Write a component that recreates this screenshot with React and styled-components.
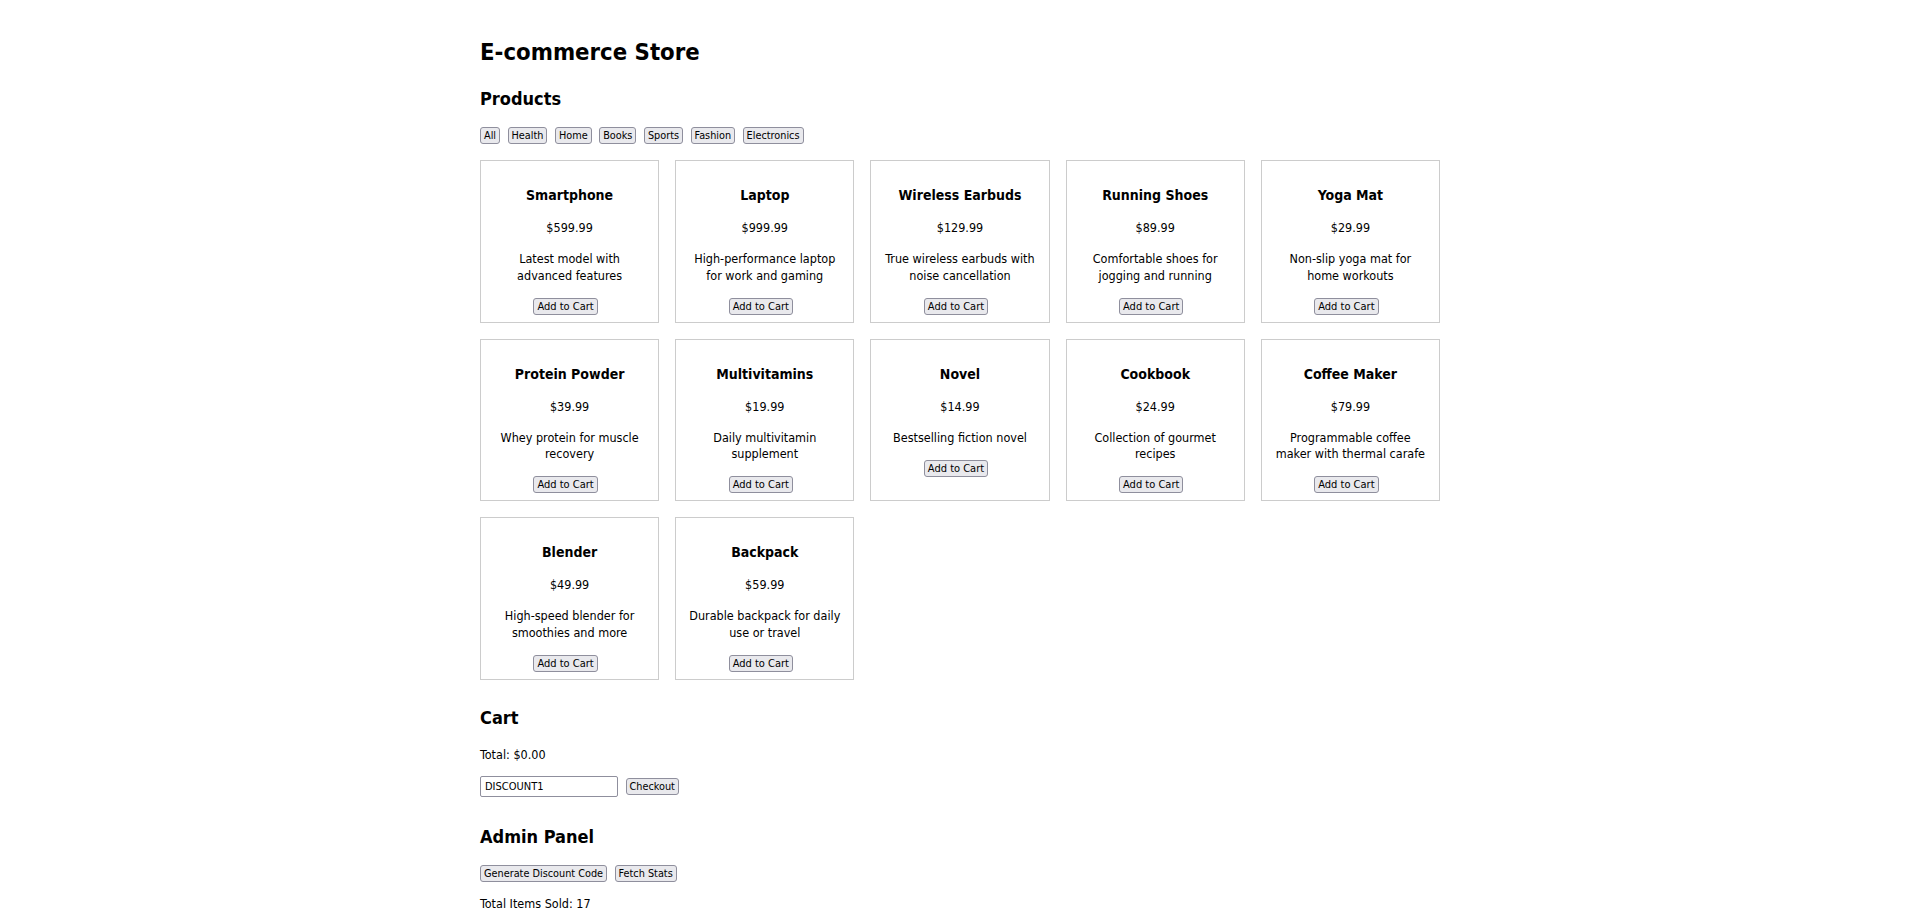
import React, { useState } from "react";
import styled, { createGlobalStyle } from "styled-components";

const GlobalStyle = createGlobalStyle`
  body {
    margin: 0;
    background: #fff;
    color: #000;
    font-family: "DejaVu Sans Condensed", "DejaVu Sans", "Liberation Sans", sans-serif;
    font-size: 12.5px;
  }
`;

const Page = styled.div`
  width: 960px;
  margin: 0 auto;
  padding-top: 38px;
  padding-bottom: 20px;
`;

const Title = styled.h1`
  font-size: 23.7px;
  line-height: 28px;
  font-weight: bold;
  margin: 0 0 22px;
`;

const SectionTitle = styled.h2`
  font-size: 18px;
  line-height: 21px;
  font-weight: bold;
  margin: ${p => p.$top || 0}px 0 ${p => p.$bottom || 18}px;
`;

const Button = styled.button`
  font-family: inherit;
  font-size: 10.8px;
  line-height: 13px;
  color: #000;
  background: #e9e9ed;
  border: 1px solid #8f8f9d;
  border-radius: 3px;
  padding: 1px 3px;
  margin: 0;
  cursor: pointer;
`;

const Row = styled.div`
  display: flex;
  align-items: center;
  gap: 7.5px;
  margin-bottom: ${p => p.$bottom || 0}px;
`;

const Grid = styled.div`
  display: grid;
  grid-template-columns: repeat(5, 1fr);
  gap: 16px;
  margin-top: 16px;
`;

const Card = styled.div`
  border: 1px solid #ccc;
  padding: 10px 11px 7px;
  text-align: center;
`;

const CardTitle = styled.h3`
  font-size: 14px;
  line-height: 16px;
  font-weight: bold;
  margin: 16px 0 17px;
`;

const Price = styled.p`
  line-height: 15px;
  margin: 0 0 16px;
`;

const Desc = styled.p`
  line-height: 16.5px;
  margin: 0 0 13.5px;
`;

const CartButton = styled(Button)`
  font-size: 11px;
  margin-right: 8px;
`;

const Text = styled.p`
  line-height: 15px;
  margin: 0 0 ${p => p.$bottom || 0}px;
`;

const CodeInput = styled.input`
  width: 138px;
  height: 21px;
  box-sizing: border-box;
  font-family: inherit;
  font-size: 11px;
  color: #000;
  border: 1px solid #8f8f9d;
  border-radius: 2px;
  padding: 0 4px;
`;

const categories = ["All", "Health", "Home", "Books", "Sports", "Fashion", "Electronics"];

const products = [
  { name: "Smartphone", price: 599.99, desc: "Latest model with advanced features" },
  { name: "Laptop", price: 999.99, desc: "High-performance laptop for work and gaming" },
  { name: "Wireless Earbuds", price: 129.99, desc: "True wireless earbuds with noise cancellation" },
  { name: "Running Shoes", price: 89.99, desc: "Comfortable shoes for jogging and running" },
  { name: "Yoga Mat", price: 29.99, desc: "Non-slip yoga mat for home workouts" },
  { name: "Protein Powder", price: 39.99, desc: "Whey protein for muscle recovery" },
  { name: "Multivitamins", price: 19.99, desc: "Daily multivitamin supplement" },
  { name: "Novel", price: 14.99, desc: "Bestselling fiction novel" },
  { name: "Cookbook", price: 24.99, desc: "Collection of gourmet recipes" },
  { name: "Coffee Maker", price: 79.99, desc: "Programmable coffee maker with thermal carafe" },
  { name: "Blender", price: 49.99, desc: "High-speed blender for smoothies and more" },
  { name: "Backpack", price: 59.99, desc: "Durable backpack for daily use or travel" },
];

const App = () => {
  const [code, setCode] = useState("DISCOUNT1");
  return (
    <Page>
      <GlobalStyle />
      <Title>E-commerce Store</Title>
      <SectionTitle>Products</SectionTitle>
      <Row>
        {categories.map(c => (
          <Button key={c}>{c}</Button>
        ))}
      </Row>
      <Grid>
        {products.map(p => (
          <Card key={p.name}>
            <CardTitle>{p.name}</CardTitle>
            <Price>${p.price.toFixed(2)}</Price>
            <Desc>{p.desc}</Desc>
            <CartButton>Add to Cart</CartButton>
          </Card>
        ))}
      </Grid>
      <SectionTitle $top={27.5} $bottom={19}>Cart</SectionTitle>
      <Text $bottom={14}>Total: $0.00</Text>
      <Row>
        <CodeInput value={code} onChange={e => setCode(e.target.value)} />
        <Button>Checkout</Button>
      </Row>
      <SectionTitle $top={29} $bottom={18}>Admin Panel</SectionTitle>
      <Row $bottom={14}>
        <Button>Generate Discount Code</Button>
        <Button>Fetch Stats</Button>
      </Row>
      <Text>Total Items Sold: 17</Text>
    </Page>
  );
};

export default App;
